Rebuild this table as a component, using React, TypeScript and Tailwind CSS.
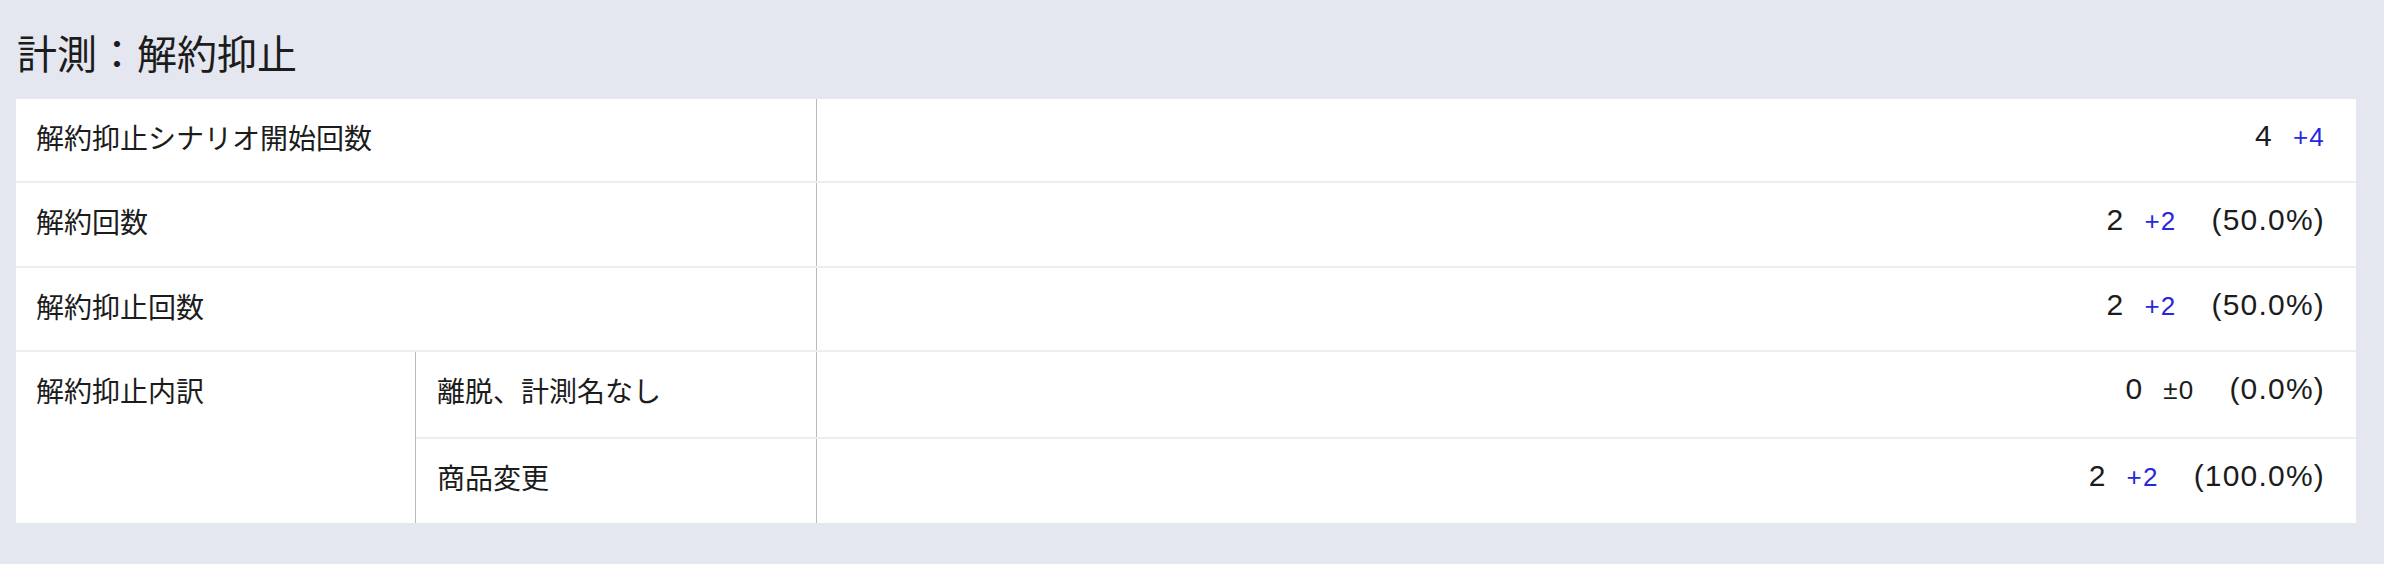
import React from "react";

type Stat = { count: number; diff: string; plus: boolean; pct?: string };

const StatValue = ({ stat }: { stat: Stat }) => (
	<div className="flex-1 border-l border-[#bababa] pt-[16px] pr-[31px] text-right font-['Liberation_Sans','Noto_Sans_CJK_JP',sans-serif] text-[30px] leading-[42px] tracking-[1.2px] text-[#1c1c1c]">
		<span>{stat.count}</span>
		<span className={`ml-[20px] text-[26px] ${stat.plus ? "text-[#2727dc]" : "text-[#1c1c1c]"}`}>{stat.diff}</span>
		{stat.pct && <span className="ml-[35px]">({stat.pct})</span>}
	</div>
);

const Row = ({ label, stat, h }: { label: string; stat: Stat; h: string }) => (
	<div className={`flex border-b-2 border-[#eceef2] ${h}`}>
		<div className="w-[800px] pt-[17px] pl-5 text-[28px] leading-[42px] text-[#1c1c1c]">{label}</div>
		<StatValue stat={stat} />
	</div>
);

export default function App() {
	return (
		<div className="min-h-[564px] bg-[#e4e7f0] pt-[28px] pr-[28px] pl-4 font-['Noto_Sans_CJK_JP',sans-serif]">
			<h1 className="pl-[1px] text-[40px] leading-[48px] font-normal text-[#1c1c1c]">計測：解約抑止</h1>
			<div className="mt-[23px] bg-white">
				<Row h="h-[84px]" label="解約抑止シナリオ開始回数" stat={{ count: 4, diff: "+4", plus: true }} />
				<Row h="h-[85px]" label="解約回数" stat={{ count: 2, diff: "+2", plus: true, pct: "50.0%" }} />
				<Row h="h-[84px]" label="解約抑止回数" stat={{ count: 2, diff: "+2", plus: true, pct: "50.0%" }} />
				<div className="flex">
					<div className="w-[399px] pt-[17px] pl-5 text-[28px] leading-[42px] text-[#1c1c1c]">解約抑止内訳</div>
					<div className="flex flex-1 flex-col border-l border-[#bababa]">
						<div className="flex h-[87px] border-b-2 border-[#eceef2]">
							<div className="w-[400px] pt-[17px] pl-[21px] text-[28px] leading-[42px] text-[#1c1c1c]">離脱、計測名なし</div>
							<StatValue stat={{ count: 0, diff: "±0", plus: false, pct: "0.0%" }} />
						</div>
						<div className="flex h-[84px]">
							<div className="w-[400px] pt-[17px] pl-[21px] text-[28px] leading-[42px] text-[#1c1c1c]">商品変更</div>
							<StatValue stat={{ count: 2, diff: "+2", plus: true, pct: "100.0%" }} />
						</div>
					</div>
				</div>
			</div>
		</div>
	);
}
